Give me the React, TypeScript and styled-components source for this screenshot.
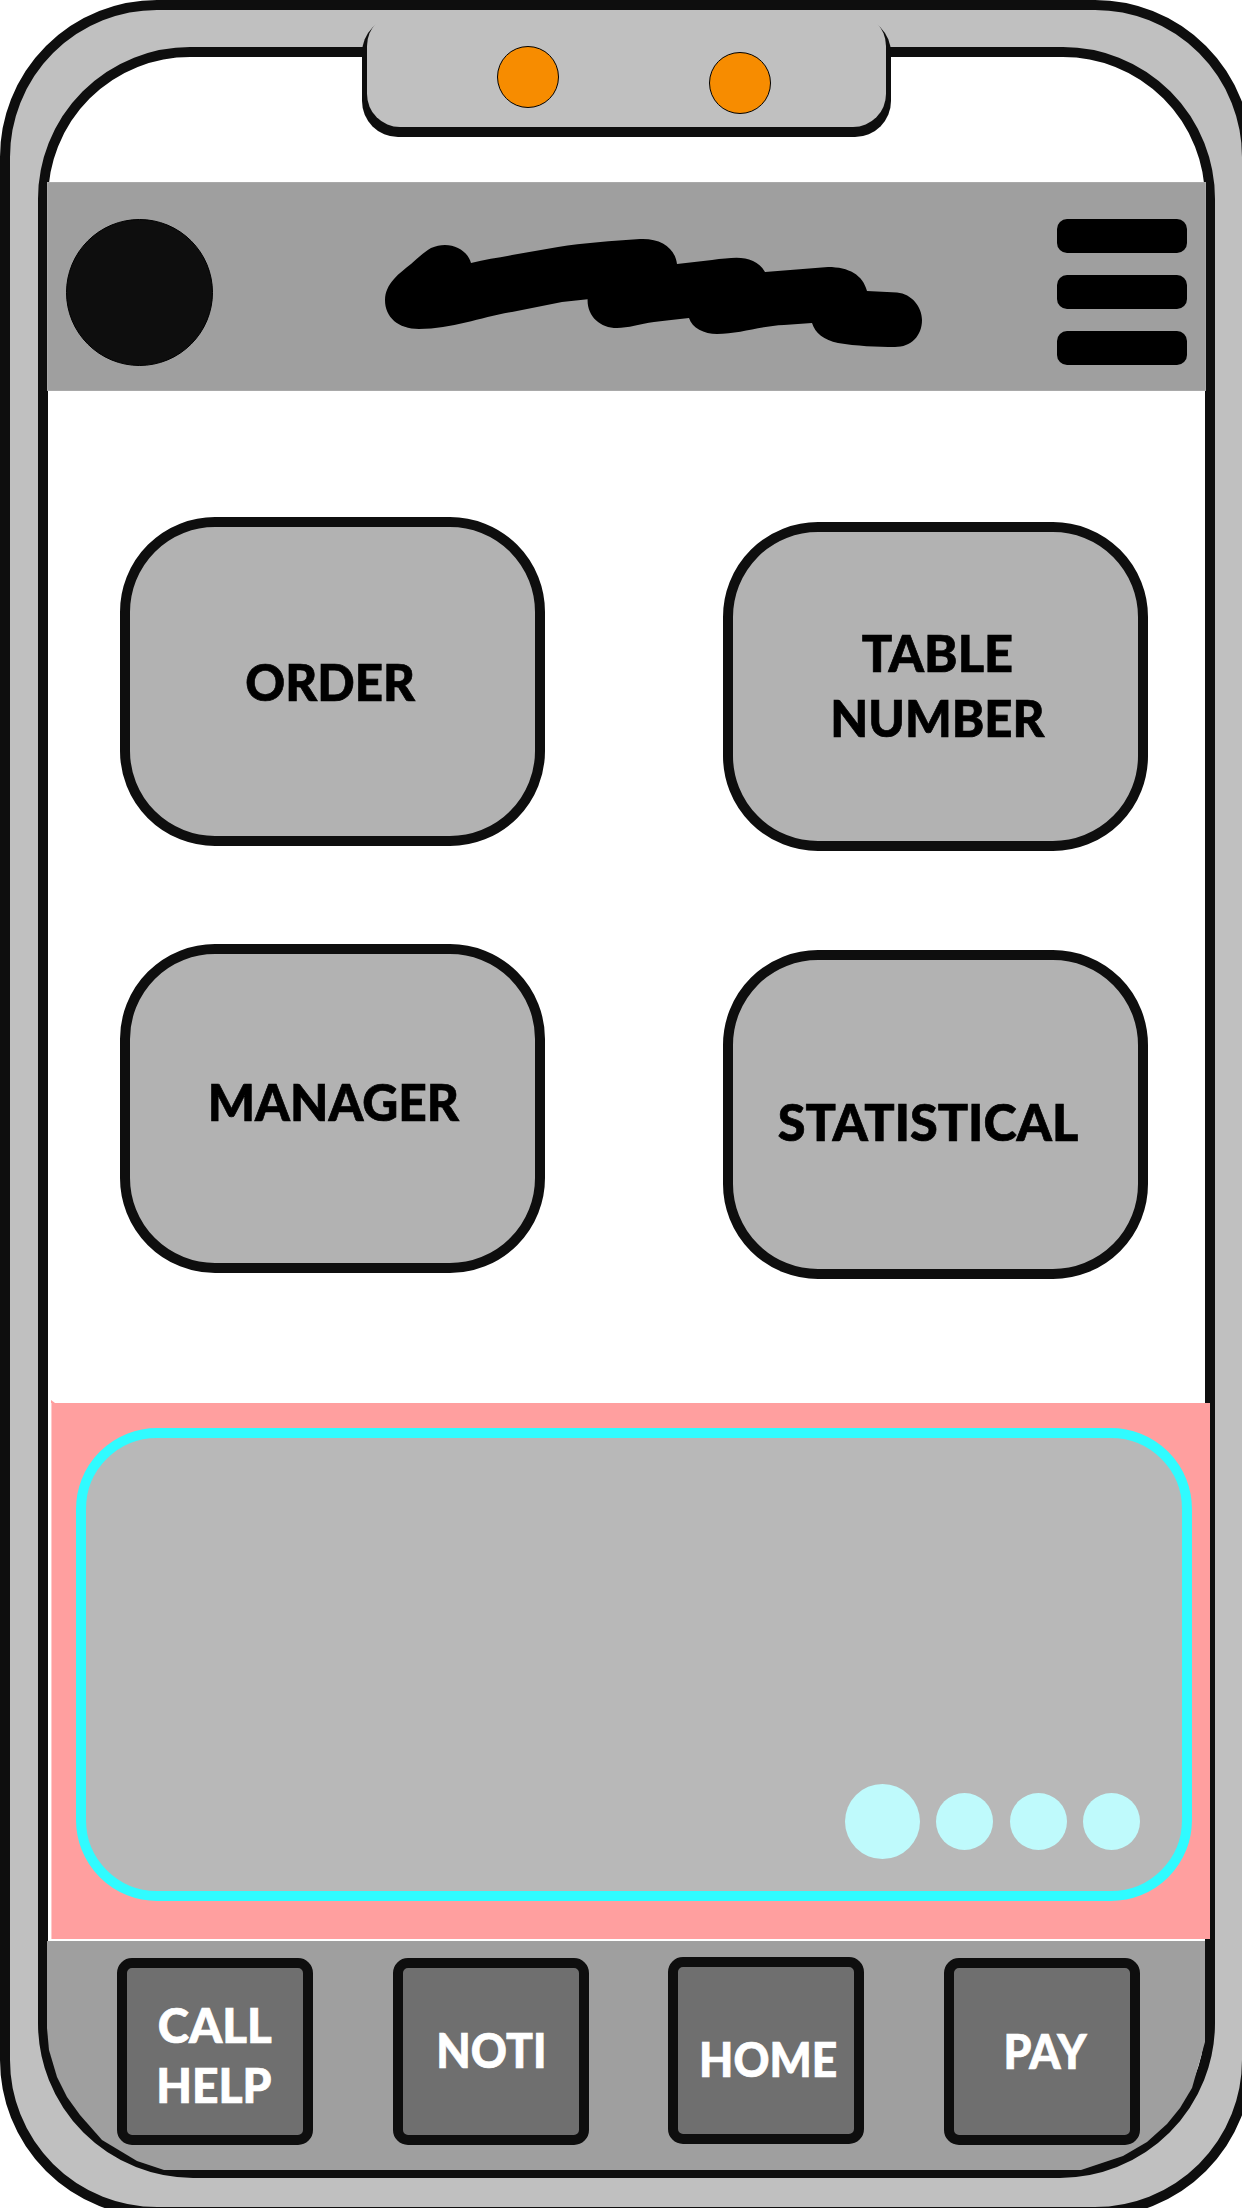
import React from "react";
import styled, { createGlobalStyle } from "styled-components";

const INK = "#0e0e0e";

const GlobalStyle = createGlobalStyle`
  *, *::before, *::after { box-sizing: border-box; }
  html, body { margin: 0; padding: 0; background: #fff; }
  body { font-family: Lato, "Open Sans", sans-serif; }
`;

const Viewport = styled.div`
  width: 1242px;
  height: 2208px;
  overflow: hidden;
  background: #fff;
`;

const Device = styled.div`
  position: relative;
  width: 1252px;
  height: 2217px;
  padding: 37px 27px 29px 28px;
  border: 10px solid ${INK};
  border-radius: 157px;
  background: #c0c0c0;
`;

const Screen = styled.div`
  display: flex;
  flex-direction: column;
  width: 1177px;
  height: 2131px;
  padding-top: 125px;
  border: 10px solid ${INK};
  border-radius: 152px 152px 155px 155px;
  background: #fff;
`;

/* The notch hangs over the top edge of the screen. */
const Notch = styled.div`
  position: absolute;
  top: 7px;
  left: 352px;
  width: 529px;
  height: 120px;
  padding: 0 5px 10px;
  border-radius: 36px;
  background: ${INK};
`;

const NotchFace = styled.div`
  display: flex;
  justify-content: space-between;
  height: 114px;
  margin-top: -4px;
  padding: 33px 115px 0 130px;
  border-radius: 33px;
  background: #c0c0c0;
`;

const Lens = styled.span<{ $drop?: number }>`
  width: 62px;
  height: 62px;
  margin-top: ${(p) => p.$drop ?? 0}px;
  border: 1px solid #000;
  border-radius: 50%;
  background: #f78c00;
`;

const Header = styled.header`
  display: flex;
  justify-content: space-between;
  align-items: flex-start;
  flex: none;
  height: 209px;
  margin: 0 -1px;
  padding: 36px 18px 0;
  border: 1px solid #a9a9a9;
  background: #9f9f9f;
`;

const Avatar = styled.div`
  width: 147px;
  height: 147px;
  border: 1px solid #000;
  border-radius: 50%;
  background: ${INK};
`;

const Scribble = styled.svg`
  display: block;
  width: 540px;
  height: 94px;
  margin: 19px 0 0 38px;
`;

const MenuButton = styled.div`
  display: flex;
  flex-direction: column;
  gap: 22px;
`;

const MenuBar = styled.span`
  width: 130px;
  height: 34px;
  border-radius: 10px;
  background: #000;
`;

const Main = styled.main`
  display: flex;
  flex: none;
  gap: 178px;
  height: 1012px;
  padding-left: 72px;
`;

const Column = styled.div<{ $top: number; $gap: number }>`
  display: flex;
  flex-direction: column;
  gap: ${(p) => p.$gap}px;
  padding-top: ${(p) => p.$top}px;
`;

const Card = styled.div`
  display: flex;
  flex-direction: column;
  align-items: center;
  justify-content: center;
  width: 425px;
  height: 329px;
  border: 10px solid ${INK};
  border-radius: 95px;
  background: #b2b2b2;
  color: #000;
  font-size: 52px;
  line-height: 65px;
`;

const Label = styled.span<{ $x?: number; $y?: number; $stretch?: number }>`
  display: block;
  font-weight: 900;
  white-space: nowrap;
  -webkit-text-stroke: 0.7px currentColor;
  transform: translate(${(p) => p.$x ?? 0}px, ${(p) => p.$y ?? 0}px) scaleX(${(p) => p.$stretch ?? 1});
`;

const Promo = styled.section`
  position: relative;
  flex: none;
  width: 1159px;
  height: 536px;
  margin-left: 3px;
  padding: 25px 18px 0 24px;
  border-left: 1px solid #ffc9c9;
  background: #ff9f9f;

  &::before {
    content: "";
    position: absolute;
    top: -3px;
    left: -1px;
    width: 4px;
    height: 3px;
    background: #ff9f9f;
    clip-path: polygon(0 0, 100% 100%, 0 100%);
  }
`;

const PromoPanel = styled.div`
  display: flex;
  align-items: center;
  justify-content: flex-end;
  height: 473px;
  padding: 314px 42px 0 0;
  border: 10px solid #30fbff;
  border-radius: 81px;
  background: #b8b8b8;
`;

const Dot = styled.span<{ $size: number; $gap: number }>`
  width: ${(p) => p.$size}px;
  height: ${(p) => p.$size}px;
  margin-left: ${(p) => p.$gap}px;
  border-radius: 50%;
  background: #bffafc;
`;

const Nav = styled.nav`
  display: flex;
  flex: none;
  gap: 80px;
  width: 1159px;
  height: 229px;
  margin: 2px -1px 0;
  padding: 17px 0 0 70px;
  background: #9f9f9f;
  clip-path: polygon(
    0 0, 1158px 0, 1158px 101px, 1145px 147px, 1133px 167px, 1120px 183px,
    1100px 201px, 1076px 215px, 1034px 229px, 117px 229px, 90px 220px,
    55px 199px, 33px 174px, 20px 156px, 10px 136px, 2px 109px, 0 87px
  );
`;

const NavButton = styled.div<{ $raised?: boolean }>`
  display: flex;
  flex-direction: column;
  align-items: center;
  justify-content: center;
  width: 196px;
  height: 187px;
  margin: ${(p) => (p.$raised ? "-1px 0 0 -1px" : "0")};
  border: 10px solid ${INK};
  border-radius: 15px;
  background: #6f6f6f;
  color: #fff;
  font-size: 48px;
  line-height: 60px;
`;

const SCRIBBLE =
  "M385 300C385 292 388 286 394 279C399 273 405 269 411 264C418 258 424 252 431 248C436 246 440 245 445 245C457 245 468 252 471 263C485 259 499 258 512 255L558 247C583 243 612 241 640 239C661 238 675 248 677 264L712 260C730 258 742 256 753 261C759 264 763 268 765 272L828 267C849 267 863 275 867 291L897 292.500C912 294 922 307 922 320C922 336 911 347 895 347C877 347 856 346 838 343C824 340 815 333 812 323L784 325C760 326 739 334 717 334C704 334 692 328 689 318C677 319 665 321 654 322C640 324 628 328 617 328C600 328 587 316 587.600 299.300L562 302L512 312C481 317 453 329 419 329C398 329 385 317 385 300Z";

export default function App() {
  return (
    <>
      <GlobalStyle />
      <Viewport>
        <Device>
          <Screen>
            <Header>
              <Avatar />
              <Scribble viewBox="384 238 540 94" overflow="visible">
                <path d={SCRIBBLE} fill="#000" />
              </Scribble>
              <MenuButton>
                <MenuBar />
                <MenuBar />
                <MenuBar />
              </MenuButton>
            </Header>
            <Main>
              <Column $top={126} $gap={98}>
                <Card>
                  <Label $x={-2.5} $y={-0.5} $stretch={0.947}>ORDER</Label>
                </Card>
                <Card>
                  <Label $x={1} $y={-7.5} $stretch={0.956}>MANAGER</Label>
                </Card>
              </Column>
              <Column $top={131} $gap={99}>
                <Card>
                  <Label $x={1.5} $y={-2.5} $stretch={0.972}>TABLE</Label>
                  <Label $x={2} $y={-2.5} $stretch={0.945}>NUMBER</Label>
                </Card>
                <Card>
                  <Label $x={-7} $y={6.5} $stretch={0.969}>STATISTICAL</Label>
                </Card>
              </Column>
            </Main>
            <Promo>
              <PromoPanel>
                <Dot $size={75} $gap={0} />
                <Dot $size={57} $gap={16} />
                <Dot $size={57} $gap={17} />
                <Dot $size={57} $gap={16} />
              </PromoPanel>
            </Promo>
            <Nav>
              <NavButton>
                <Label $y={2.5} $stretch={0.988}>CALL</Label>
                <Label $x={-1} $y={2.5} $stretch={0.962}>HELP</Label>
              </NavButton>
              <NavButton>
                <Label $y={-2.5} $stretch={0.93}>NOTI</Label>
              </NavButton>
              <NavButton $raised>
                <Label $x={2.5} $y={7.5} $stretch={0.925}>HOME</Label>
              </NavButton>
              <NavButton>
                <Label $x={3.5} $y={-1.5} $stretch={0.93}>PAY</Label>
              </NavButton>
            </Nav>
          </Screen>
          <Notch>
            <NotchFace>
              <Lens />
              <Lens $drop={6} />
            </NotchFace>
          </Notch>
        </Device>
      </Viewport>
    </>
  );
}
